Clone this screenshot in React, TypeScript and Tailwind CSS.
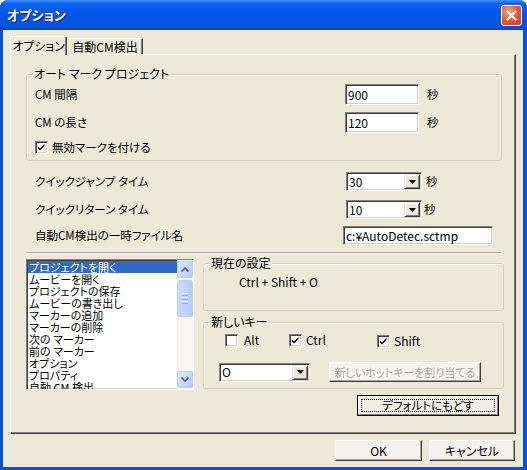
import React from 'react';

const sunken =
  'border border-t-[#808080] border-l-[#808080] border-r-white border-b-white shadow-[inset_1px_1px_0_#404040,inset_-1px_-1px_0_#d4d0c8]';

function Edit({ value, className }: { value: string; className: string }) {
  return (
    <div className={`flex items-center bg-white pl-[2px] text-[12px] ${sunken} ${className}`}>
      <span className="leading-none">{value}</span>
    </div>
  );
}

function DropArrow() {
  return (
    <div className="flex h-full w-[16px] items-center justify-center border border-t-[#ece9d8] border-l-[#ece9d8] border-r-[#404040] border-b-[#404040] bg-[#ece9d8] shadow-[inset_1px_1px_0_#fff,inset_-1px_-1px_0_#808080]">
      <svg width="7" height="4" viewBox="0 0 7 4">
        <path d="M0 0h7L3.5 4z" fill="#000" />
      </svg>
    </div>
  );
}

function Combo({ value, className }: { value: string; className: string }) {
  return (
    <div className={`flex items-stretch bg-white text-[12px] ${sunken} ${className}`}>
      <span className="flex flex-1 items-center pl-[2px] leading-none">{value}</span>
      <div className="p-[1px]">
        <DropArrow />
      </div>
    </div>
  );
}

function Check({ checked }: { checked: boolean }) {
  return (
    <div className={`h-[13px] w-[13px] shrink-0 bg-white ${sunken}`}>
      {checked && (
        <svg width="11" height="11" viewBox="0 0 11 11" className="block">
          <path d="M2 4.5l2 2 4.5-4.5v2L4 8.5l-2-2z" fill="#000" />
        </svg>
      )}
    </div>
  );
}

function Button({
  children,
  className,
  isDefault,
  disabled,
}: {
  children: React.ReactNode;
  className: string;
  isDefault?: boolean;
  disabled?: boolean;
}) {
  if (isDefault) {
    return (
      <div className={`border border-black ${className}`}>
        <div className="flex h-full items-center justify-center border border-t-white border-l-white border-r-[#808080] border-b-[#808080] bg-[#f1efe6] p-[2px]">
          <div className="flex h-full w-full items-center justify-center border border-dotted border-black">
            {children}
          </div>
        </div>
      </div>
    );
  }
  return (
    <div
      className={`flex items-center justify-center whitespace-nowrap border border-t-white border-l-white border-r-[#404040] border-b-[#404040] bg-[#f4f3ee] shadow-[inset_-1px_-1px_0_#aca899] ${
        disabled ? 'text-[#aca899] [text-shadow:1px_1px_0_#fff]' : ''
      } ${className}`}
    >
      {children}
    </div>
  );
}

function Group({
  title,
  className,
  children,
}: {
  title: string;
  className: string;
  children?: React.ReactNode;
}) {
  return (
    <fieldset
      className={`rounded-[3px] border border-[#d0d0bf] shadow-[inset_1px_1px_0_#fff] ${className}`}
    >
      <legend className="-ml-[2px] bg-[#ece9d8] px-[1px] text-[12px] leading-[14px]">{title}</legend>
      {children}
    </fieldset>
  );
}

function ScrollBtn({ up }: { up?: boolean }) {
  return (
    <div className="flex h-[17px] w-[16px] items-center justify-center rounded-[2px] border border-[#b9cff5] bg-gradient-to-br from-[#e0e9fd] to-[#b5caf5]">
      <svg width="8" height="5" viewBox="0 0 8 5">
        <path
          d={up ? 'M0.5 4.5L4 1l3.5 3.5' : 'M0.5 0.5L4 4l3.5-3.5'}
          stroke="#4d6185"
          strokeWidth="1.6"
          fill="none"
        />
      </svg>
    </div>
  );
}

const items = [
  'プロジェクトを開く',
  'ムービーを開く',
  'プロジェクトの保存',
  'ムービーの書き出し',
  'マーカーの追加',
  'マーカーの削除',
  '次の マーカー',
  '前の マーカー',
  'オプション',
  'プロパティ',
  '自動 CM 検出',
];

export default function App() {
  return (
    <div className="flex h-[470px] w-[527px] flex-col overflow-hidden rounded-t-[8px] bg-[#0050e0] font-['Noto_Sans_CJK_JP',sans-serif] text-[11.5px] text-black [font-feature-settings:'palt']">
      {/* Title bar */}
      <div className="flex h-[30px] shrink-0 items-center justify-between bg-[linear-gradient(180deg,#3d8ffb_0%,#0c61ea_12%,#0056e6_50%,#0052e2_85%,#0043cf_100%)] pl-[7px] pr-[5px]">
        <span className="text-[13px] font-bold text-white [text-shadow:1px_1px_0_#0a1e80]">オプション</span>
        <div className="flex h-[21px] w-[21px] items-center justify-center rounded-[3px] border border-white bg-[radial-gradient(circle_at_35%_30%,#f2a287_0%,#e2542f_55%,#c83e1e_100%)]">
          <svg width="11" height="11" viewBox="0 0 11 11">
            <path d="M1.5 1.5l8 8M9.5 1.5l-8 8" stroke="#fff" strokeWidth="2.2" strokeLinecap="square" />
          </svg>
        </div>
      </div>

      {/* Client area */}
      <div className="mb-[3px] ml-[3px] mr-[4px] flex flex-1 flex-col bg-[#ece9d8] pl-[7px] pr-[7px] pt-[6px]">
        {/* Tabs */}
        <div className="relative z-10 flex h-[18px] items-end text-[12px]">
          <div className="-mb-[1px] flex h-[19px] w-[57px] items-center justify-center rounded-t-[2px] border border-b-0 border-l-white border-t-white border-r-[#404040] bg-[#ece9d8] shadow-[inset_-1px_0_0_#808080]">
            オプション
          </div>
          <div className="flex h-[16px] w-[76px] items-center justify-center rounded-t-[2px] border border-b-0 border-l-white border-t-white border-r-[#404040] shadow-[inset_-1px_0_0_#808080]">
            自動CM検出
          </div>
        </div>

        {/* Tab panel */}
        <div className="flex h-[380px] flex-col border border-t-white border-l-white border-r-[#404040] border-b-[#404040] shadow-[inset_-1px_-1px_0_#808080]">
          <Group title="オート マーク プロジェクト" className="ml-[15px] mr-[13px] mt-[12px] h-[94px] px-[8px]">
            <div className="mt-[3px] flex h-[21px] items-center">
              <span className="w-[310px]">CM 間隔</span>
              <Edit value="900" className="h-[21px] w-[74px]" />
              <span className="ml-[8px]">秒</span>
            </div>
            <div className="mt-[7px] flex h-[21px] items-center">
              <span className="w-[310px]">CM の長さ</span>
              <Edit value="120" className="h-[21px] w-[74px]" />
              <span className="ml-[8px]">秒</span>
            </div>
            <div className="mt-[6px] flex items-center gap-[4px]">
              <Check checked />
              <span>無効マークを付ける</span>
            </div>
          </Group>

          <div className="ml-[24px] mt-[11px] flex h-[19px] items-center">
            <span className="w-[311px]">クイックジャンプ タイム</span>
            <Combo value="30" className="h-[19px] w-[76px]" />
            <span className="ml-[4px]">秒</span>
          </div>
          <div className="ml-[24px] mt-[9px] flex h-[19px] items-center">
            <span className="w-[311px]">クイックリターン タイム</span>
            <Combo value="10" className="h-[19px] w-[76px]" />
            <span className="ml-[2px]">秒</span>
          </div>
          <div className="ml-[24px] mt-[7px] flex h-[19px] items-center">
            <span className="w-[308px]">自動CM検出の一時ファイル名</span>
            <Edit value="c:¥AutoDetec.sctmp" className="h-[19px] w-[150px]" />
          </div>

          <div className="ml-[15px] mr-[14px] mt-[7px] h-[2px] border-t border-b border-t-[#aca899] border-b-white" />

          <div className="ml-[15px] mr-[11px] mt-[2px] flex items-start gap-[9px]">
            <div className={`mt-[3px] flex h-[131px] w-[168px] bg-white ${sunken}`}>
              <div className="flex flex-1 flex-col overflow-hidden pl-[1px] pt-[1px] text-[11px] leading-[12px]">
                {items.map((it, i) => (
                  <div
                    key={it}
                    className={`h-[12px] shrink-0 whitespace-nowrap pl-[1px] ${
                      i === 0 ? 'bg-[#316ac5] text-white' : ''
                    }`}
                  >
                    {it}
                  </div>
                ))}
              </div>
              <div className="flex w-[16px] flex-col justify-between bg-[#f7f6f2] py-[1px]">
                <div className="flex flex-col gap-[2px]">
                  <ScrollBtn up />
                  <div className="flex h-[37px] w-[16px] flex-col items-center justify-center gap-[1px] rounded-[2px] border border-[#b9cff5] bg-gradient-to-r from-[#cad8fb] to-[#b9ccf6]">
                    <div className="h-[1px] w-[6px] bg-[#eef3fe]" />
                    <div className="h-[1px] w-[6px] bg-[#8ca8e6]" />
                    <div className="h-[1px] w-[6px] bg-[#eef3fe]" />
                    <div className="h-[1px] w-[6px] bg-[#8ca8e6]" />
                    <div className="h-[1px] w-[6px] bg-[#eef3fe]" />
                    <div className="h-[1px] w-[6px] bg-[#8ca8e6]" />
                  </div>
                </div>
                <ScrollBtn />
              </div>
            </div>

            <div className="flex flex-1 flex-col">
              <Group title="現在の設定" className="h-[55px] px-[8px]">
                <div className="ml-[27px] mt-[3px] text-[12px]">Ctrl + Shift + O</div>
              </Group>
              <Group title="新しいキー" className="mt-[4px] h-[74px] px-[8px]">
                <div className="mt-[1px] flex items-center text-[12px]">
                  <div className="flex w-[77px] items-center gap-[6px] pl-[13px]">
                    <Check checked={false} />
                    <span>Alt</span>
                  </div>
                  <div className="flex w-[88px] items-center gap-[4px]">
                    <Check checked />
                    <span>Ctrl</span>
                  </div>
                  <div className="mt-[2px] flex items-center gap-[4px]">
                    <Check checked />
                    <span>Shift</span>
                  </div>
                </div>
                <div className="mt-[12px] flex items-center gap-[19px] pl-[7px]">
                  <Combo value="O" className="h-[19px] w-[91px]" />
                  <Button disabled className="h-[20px] w-[152px] text-[11px]">
                    新しいホットキーを割り当てる
                  </Button>
                </div>
              </Group>
            </div>
          </div>

          <div className="mr-[16px] mt-[5px] flex justify-end">
            <Button isDefault className="h-[21px] w-[142px]">
              デフォルトにもどす
            </Button>
          </div>
        </div>

        {/* Bottom buttons */}
        <div className="mt-[6px] flex justify-end gap-[7px] pr-[1px] text-[12px]">
          <Button className="h-[21px] w-[87px]">OK</Button>
          <Button className="h-[21px] w-[86px]">キャンセル</Button>
        </div>
      </div>
    </div>
  );
}
